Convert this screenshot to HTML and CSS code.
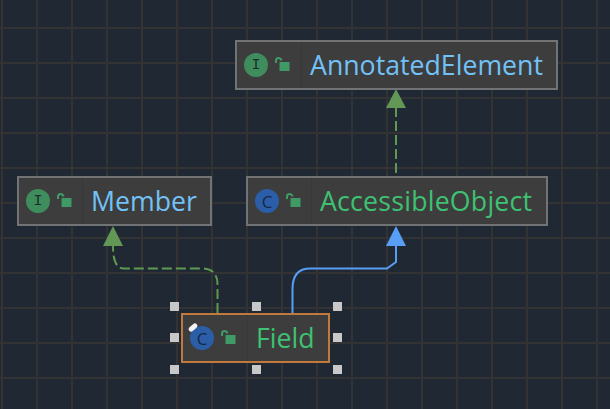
FILE: index.html
```html
<!DOCTYPE html>
<html lang="en">
<head>
<meta charset="utf-8">
<title>Field diagram</title>
<link rel="stylesheet" href="styles.css">
</head>
<body>
<main class="canvas">
  <svg class="edges" width="610" height="409" viewBox="0 0 610 409" fill="none">
    <path class="dash" d="M396 107V176"/>
    <polygon class="head-green" points="396,89 386,108 406,108"/>
    <path class="dash" d="M217.500 313V284C217.500 274 212 268.500 202 268.500H124C117 268.500 113 262 113 246"/>
    <polygon class="head-green" points="113,226 103,246 123,246"/>
    <path class="solid" d="M292.500 313V289C292.500 275 299 268.500 310 268.500H387L396 262V245"/>
    <polygon class="head-blue" points="396,226 386,246 406,246"/>
  </svg>

  <article class="node node-annotated">
    <div class="icons">
      <span class="badge badge-i">I</span>
      <svg class="lock" width="15" height="14" viewBox="0 0 15 14"><path class="lock-arc" d="M1 6V3.500C1 1.800 2.300 1 3.500 1S6 1.800 6.500 3.500"/><rect class="lock-body" x="4.500" y="5" width="10" height="9"/></svg>
    </div>
    <div class="name name-blue">AnnotatedElement</div>
  </article>

  <article class="node node-member">
    <div class="icons">
      <span class="badge badge-i">I</span>
      <svg class="lock" width="15" height="14" viewBox="0 0 15 14"><path class="lock-arc" d="M1 6V3.500C1 1.800 2.300 1 3.500 1S6 1.800 6.500 3.500"/><rect class="lock-body" x="4.500" y="5" width="10" height="9"/></svg>
    </div>
    <div class="name name-blue">Member</div>
  </article>

  <article class="node node-accessible">
    <div class="icons">
      <span class="badge badge-c">C</span>
      <svg class="lock" width="15" height="14" viewBox="0 0 15 14"><path class="lock-arc" d="M1 6V3.500C1 1.800 2.300 1 3.500 1S6 1.800 6.500 3.500"/><rect class="lock-body" x="4.500" y="5" width="10" height="9"/></svg>
    </div>
    <div class="name name-green">AccessibleObject</div>
  </article>

  <article class="node node-field">
    <div class="icons">
      <span class="badge badge-c">C<i class="pin"></i></span>
      <svg class="lock" width="15" height="14" viewBox="0 0 15 14"><path class="lock-arc" d="M1 6V3.500C1 1.800 2.300 1 3.500 1S6 1.800 6.500 3.500"/><rect class="lock-body" x="4.500" y="5" width="10" height="9"/></svg>
    </div>
    <div class="name name-green">Field</div>
  </article>

  <i class="handle h-tl"></i><i class="handle h-tc"></i><i class="handle h-tr"></i>
  <i class="handle h-ml"></i><i class="handle h-mr"></i>
  <i class="handle h-bl"></i><i class="handle h-bc"></i><i class="handle h-br"></i>
</main>
</body>
</html>
```
FILE: styles.css
```css
html, body {
  margin: 0;
  padding: 0;
  background: #1f2833;
}

.canvas {
  position: relative;
  width: 610px;
  height: 409px;
  overflow: hidden;
  background-color: #1f2833;
  background-image:
    linear-gradient(to right, #333333 2px, transparent 2px),
    linear-gradient(to bottom, #333333 2px, transparent 2px);
  background-size: 35px 35px;
  background-position: 1px 27px;
}

.edges {
  position: absolute;
  left: 0;
  top: 0;
}

.dash {
  stroke: #5f9a50;
  stroke-width: 2;
  stroke-dasharray: 10 4;
}

.solid {
  stroke: #589df6;
  stroke-width: 2;
}

.head-green { fill: #629755; }
.head-blue { fill: #589df6; }

.node {
  position: absolute;
  display: flex;
  box-sizing: border-box;
  height: 50px;
  background: #3d3d3d;
  border: 2px solid #727375;
  font-family: "Open Sans", "Noto Sans", sans-serif;
}

.node-annotated { left: 235px; top: 40px; width: 323px; }
.node-annotated .icons { width: 65px; }
.node-member { left: 17px; top: 176px; width: 195px; }
.node-member .icons { width: 64px; }
.node-accessible { left: 246px; top: 176px; width: 302px; }
.node-accessible .icons { width: 64px; }
.node-accessible .name { letter-spacing: 0.220px; }
.node-field {
  left: 181px;
  top: 313px;
  width: 149px;
  border-color: #c27a3c;
}
.node-field .icons { width: 65px; }

.icons {
  display: flex;
  align-items: center;
  box-sizing: border-box;
  flex: none;
  padding-left: 7px;
  gap: 7px;
  border-right: 1px solid #383838;
}

.badge {
  position: relative;
  display: flex;
  align-items: center;
  justify-content: center;
  flex: none;
  width: 24px;
  height: 24px;
  border-radius: 50%;
}

.badge-i {
  background: #3f8c5d;
  color: #17302b;
  font-family: "Liberation Mono", monospace;
  font-size: 15px;
  font-weight: 400;
}

.badge-c {
  background: #2b5ea6;
  color: #14294a;
  font-family: "Open Sans", sans-serif;
  font-size: 17px;
  font-weight: 400;
}

.pin {
  position: absolute;
  left: -2px;
  top: -1px;
  width: 10px;
  height: 5px;
  background: #f2f2f2;
  border-radius: 3px;
  transform: rotate(-40deg);
}

.lock {
  flex: none;
  margin-bottom: 2px;
}
.lock-arc { fill: none; stroke: #3f9a66; stroke-width: 2; }
.lock-body { fill: #3f9a66; }

.name {
  display: flex;
  align-items: center;
  padding-left: 8px;
  font-size: 26.700px;
  line-height: 1;
  white-space: nowrap;
}

.name-blue { color: #72c2f7; }
.name-green { color: #3ec172; }

.handle {
  position: absolute;
  width: 9px;
  height: 9px;
  background: #c8c8c8;
}

.h-tl { left: 170px; top: 302px; }
.h-tc { left: 252px; top: 302px; }
.h-tr { left: 333px; top: 302px; }
.h-ml { left: 170px; top: 333px; }
.h-mr { left: 333px; top: 333px; }
.h-bl { left: 170px; top: 365px; }
.h-bc { left: 252px; top: 365px; }
.h-br { left: 333px; top: 365px; }
```
